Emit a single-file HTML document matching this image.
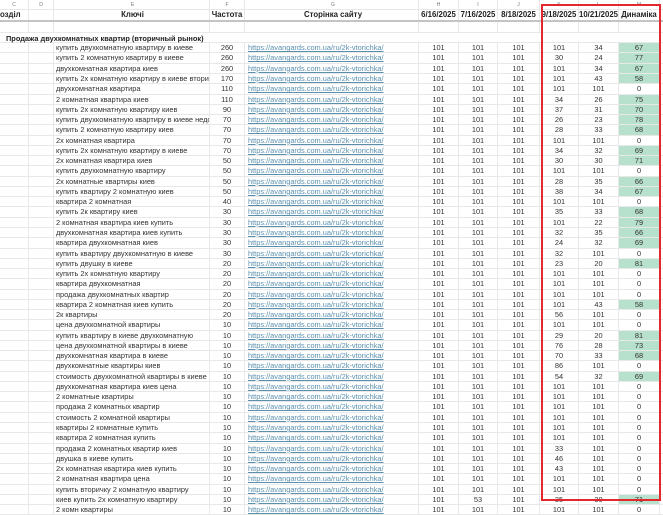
<!DOCTYPE html>
<html><head><meta charset="utf-8"><style>
*{margin:0;padding:0;box-sizing:border-box}
body{width:663px;height:512px;overflow:hidden;background:#fff;font-family:"Liberation Sans","DejaVu Sans",sans-serif;color:#333;font-size:7.4px;position:relative}
.r{display:flex;height:10.27px;border-bottom:1px solid #e8e8e8;line-height:9.3px;white-space:nowrap}
.r>*{border-right:1px solid #e8e8e8;overflow:hidden;text-align:center;font-weight:normal;font-style:normal;text-decoration:none;display:block}
.r>*:nth-child(1){width:29px}.r>*:nth-child(2){width:25px}
.r>*:nth-child(3){width:156px;text-align:left;padding-left:2px}
.r>*:nth-child(4){width:35px}
.r>*:nth-child(5){width:174px;text-align:left;padding-left:3px;color:#5a8fae;text-decoration:underline}
.r>*:nth-child(6){width:40px}.r>*:nth-child(7){width:39px}.r>*:nth-child(8){width:42px}
.r>*:nth-child(9){width:39px}.r>*:nth-child(10){width:40px}.r>*:nth-child(11){width:41px}
.r>*:nth-child(12){width:3px;border-right:none}
.g{background:#b7e1cd}
#hd{position:absolute;left:0;top:0;width:663px}
.lt{height:10px;font-size:5px;color:#777;line-height:10px}
.lt>*{font-size:5px}
.hr{height:12px;line-height:10px;border-bottom:2px solid #c4c4c4}
.hr>*{font-weight:bold!important;color:#222;font-size:7.8px}
#bd{position:absolute;left:0;top:43.2px;width:663px}
#box{position:absolute;left:541px;top:4px;width:120px;height:497px;border:2px solid #e2282c}
.sec{position:absolute;left:6px;top:34px;font-weight:bold;font-size:7.4px;color:#222}
</style></head><body>
<div id="hd">
<div class="r lt"><i>C</i><i>D</i><i style="text-align:center">E</i><i>F</i><i style="text-align:center;color:#777;text-decoration:none">G</i><i>H</i><i>I</i><i>J</i><i>K</i><i>L</i><i>M</i><i></i></div>
<div class="r hr"><i style="text-align:left">озділ</i><i></i><i style="text-align:center">Ключі</i><i>Частота</i><i style="text-align:center;color:#222;text-decoration:none">Сторінка сайту</i><i>6/16/2025</i><i>7/16/2025</i><i>8/18/2025</i><i>9/18/2025</i><i>10/21/2025</i><i>Динаміка</i><i></i></div>
<div class="r" style="height:10.6px"><i></i><i></i><i></i><i></i><i></i><i></i><i></i><i></i><i></i><i></i><i></i><i></i></div>
<div class="r" style="height:10.6px;border-bottom:1px solid #e8e8e8"></div>
</div>
<div class="sec">Продажа двухкомнатных квартир (вторичный рынок)</div>
<div id="bd">
<div class="r"><i></i><i></i><i>купить двухкомнатную квартиру в киеве</i><i>260</i><i>https://avangards.com.ua/ru/2k-vtorichka/</i><i>101</i><i>101</i><i>101</i><i>101</i><i>34</i><i class="g">67</i><i></i></div>
<div class="r"><i></i><i></i><i>купить 2 комнатную квартиру в киеве</i><i>260</i><i>https://avangards.com.ua/ru/2k-vtorichka/</i><i>101</i><i>101</i><i>101</i><i>30</i><i>24</i><i class="g">77</i><i></i></div>
<div class="r"><i></i><i></i><i>двухкомнатная квартира киев</i><i>260</i><i>https://avangards.com.ua/ru/2k-vtorichka/</i><i>101</i><i>101</i><i>101</i><i>101</i><i>34</i><i class="g">67</i><i></i></div>
<div class="r"><i></i><i></i><i>купить 2х комнатную квартиру в киеве вторич-</i><i>170</i><i>https://avangards.com.ua/ru/2k-vtorichka/</i><i>101</i><i>101</i><i>101</i><i>101</i><i>43</i><i class="g">58</i><i></i></div>
<div class="r"><i></i><i></i><i>двухкомнатная квартира</i><i>110</i><i>https://avangards.com.ua/ru/2k-vtorichka/</i><i>101</i><i>101</i><i>101</i><i>101</i><i>101</i><i>0</i><i></i></div>
<div class="r"><i></i><i></i><i>2 комнатная квартира киев</i><i>110</i><i>https://avangards.com.ua/ru/2k-vtorichka/</i><i>101</i><i>101</i><i>101</i><i>34</i><i>26</i><i class="g">75</i><i></i></div>
<div class="r"><i></i><i></i><i>купить 2х комнатную квартиру киев</i><i>90</i><i>https://avangards.com.ua/ru/2k-vtorichka/</i><i>101</i><i>101</i><i>101</i><i>37</i><i>31</i><i class="g">70</i><i></i></div>
<div class="r"><i></i><i></i><i>купить двухкомнатную квартиру в киеве недо</i><i>70</i><i>https://avangards.com.ua/ru/2k-vtorichka/</i><i>101</i><i>101</i><i>101</i><i>26</i><i>23</i><i class="g">78</i><i></i></div>
<div class="r"><i></i><i></i><i>купить 2 комнатную квартиру киев</i><i>70</i><i>https://avangards.com.ua/ru/2k-vtorichka/</i><i>101</i><i>101</i><i>101</i><i>28</i><i>33</i><i class="g">68</i><i></i></div>
<div class="r"><i></i><i></i><i>2х комнатная квартира</i><i>70</i><i>https://avangards.com.ua/ru/2k-vtorichka/</i><i>101</i><i>101</i><i>101</i><i>101</i><i>101</i><i>0</i><i></i></div>
<div class="r"><i></i><i></i><i>купить 2х комнатную квартиру в киеве</i><i>70</i><i>https://avangards.com.ua/ru/2k-vtorichka/</i><i>101</i><i>101</i><i>101</i><i>34</i><i>32</i><i class="g">69</i><i></i></div>
<div class="r"><i></i><i></i><i>2х комнатная квартира киев</i><i>50</i><i>https://avangards.com.ua/ru/2k-vtorichka/</i><i>101</i><i>101</i><i>101</i><i>30</i><i>30</i><i class="g">71</i><i></i></div>
<div class="r"><i></i><i></i><i>купить двухкомнатную квартиру</i><i>50</i><i>https://avangards.com.ua/ru/2k-vtorichka/</i><i>101</i><i>101</i><i>101</i><i>101</i><i>101</i><i>0</i><i></i></div>
<div class="r"><i></i><i></i><i>2х комнатные квартиры киев</i><i>50</i><i>https://avangards.com.ua/ru/2k-vtorichka/</i><i>101</i><i>101</i><i>101</i><i>28</i><i>35</i><i class="g">66</i><i></i></div>
<div class="r"><i></i><i></i><i>купить квартиру 2 комнатную киев</i><i>50</i><i>https://avangards.com.ua/ru/2k-vtorichka/</i><i>101</i><i>101</i><i>101</i><i>38</i><i>34</i><i class="g">67</i><i></i></div>
<div class="r"><i></i><i></i><i>квартира 2 комнатная</i><i>40</i><i>https://avangards.com.ua/ru/2k-vtorichka/</i><i>101</i><i>101</i><i>101</i><i>101</i><i>101</i><i>0</i><i></i></div>
<div class="r"><i></i><i></i><i>купить 2к квартиру киев</i><i>30</i><i>https://avangards.com.ua/ru/2k-vtorichka/</i><i>101</i><i>101</i><i>101</i><i>35</i><i>33</i><i class="g">68</i><i></i></div>
<div class="r"><i></i><i></i><i>2 комнатная квартира киев купить</i><i>30</i><i>https://avangards.com.ua/ru/2k-vtorichka/</i><i>101</i><i>101</i><i>101</i><i>101</i><i>22</i><i class="g">79</i><i></i></div>
<div class="r"><i></i><i></i><i>двухкомнатная квартира киев купить</i><i>30</i><i>https://avangards.com.ua/ru/2k-vtorichka/</i><i>101</i><i>101</i><i>101</i><i>32</i><i>35</i><i class="g">66</i><i></i></div>
<div class="r"><i></i><i></i><i>квартира двухкомнатная киев</i><i>30</i><i>https://avangards.com.ua/ru/2k-vtorichka/</i><i>101</i><i>101</i><i>101</i><i>24</i><i>32</i><i class="g">69</i><i></i></div>
<div class="r"><i></i><i></i><i>купить квартиру двухкомнатную в киеве</i><i>30</i><i>https://avangards.com.ua/ru/2k-vtorichka/</i><i>101</i><i>101</i><i>101</i><i>32</i><i>101</i><i>0</i><i></i></div>
<div class="r"><i></i><i></i><i>купить двушку в киеве</i><i>20</i><i>https://avangards.com.ua/ru/2k-vtorichka/</i><i>101</i><i>101</i><i>101</i><i>23</i><i>20</i><i class="g">81</i><i></i></div>
<div class="r"><i></i><i></i><i>купить 2х комнатную квартиру</i><i>20</i><i>https://avangards.com.ua/ru/2k-vtorichka/</i><i>101</i><i>101</i><i>101</i><i>101</i><i>101</i><i>0</i><i></i></div>
<div class="r"><i></i><i></i><i>квартира двухкомнатная</i><i>20</i><i>https://avangards.com.ua/ru/2k-vtorichka/</i><i>101</i><i>101</i><i>101</i><i>101</i><i>101</i><i>0</i><i></i></div>
<div class="r"><i></i><i></i><i>продажа двухкомнатных квартир</i><i>20</i><i>https://avangards.com.ua/ru/2k-vtorichka/</i><i>101</i><i>101</i><i>101</i><i>101</i><i>101</i><i>0</i><i></i></div>
<div class="r"><i></i><i></i><i>квартира 2 комнатная киев купить</i><i>20</i><i>https://avangards.com.ua/ru/2k-vtorichka/</i><i>101</i><i>101</i><i>101</i><i>101</i><i>43</i><i class="g">58</i><i></i></div>
<div class="r"><i></i><i></i><i>2к квартиры</i><i>20</i><i>https://avangards.com.ua/ru/2k-vtorichka/</i><i>101</i><i>101</i><i>101</i><i>56</i><i>101</i><i>0</i><i></i></div>
<div class="r"><i></i><i></i><i>цена двухкомнатной квартиры</i><i>10</i><i>https://avangards.com.ua/ru/2k-vtorichka/</i><i>101</i><i>101</i><i>101</i><i>101</i><i>101</i><i>0</i><i></i></div>
<div class="r"><i></i><i></i><i>купить квартиру в киеве двухкомнатную</i><i>10</i><i>https://avangards.com.ua/ru/2k-vtorichka/</i><i>101</i><i>101</i><i>101</i><i>29</i><i>20</i><i class="g">81</i><i></i></div>
<div class="r"><i></i><i></i><i>цена двухкомнатной квартиры в киеве</i><i>10</i><i>https://avangards.com.ua/ru/2k-vtorichka/</i><i>101</i><i>101</i><i>101</i><i>76</i><i>28</i><i class="g">73</i><i></i></div>
<div class="r"><i></i><i></i><i>двухкомнатная квартира в киеве</i><i>10</i><i>https://avangards.com.ua/ru/2k-vtorichka/</i><i>101</i><i>101</i><i>101</i><i>70</i><i>33</i><i class="g">68</i><i></i></div>
<div class="r"><i></i><i></i><i>двухкомнатные квартиры киев</i><i>10</i><i>https://avangards.com.ua/ru/2k-vtorichka/</i><i>101</i><i>101</i><i>101</i><i>86</i><i>101</i><i>0</i><i></i></div>
<div class="r"><i></i><i></i><i>стоимость двухкомнатной квартиры в киеве</i><i>10</i><i>https://avangards.com.ua/ru/2k-vtorichka/</i><i>101</i><i>101</i><i>101</i><i>54</i><i>32</i><i class="g">69</i><i></i></div>
<div class="r"><i></i><i></i><i>двухкомнатная квартира киев цена</i><i>10</i><i>https://avangards.com.ua/ru/2k-vtorichka/</i><i>101</i><i>101</i><i>101</i><i>101</i><i>101</i><i>0</i><i></i></div>
<div class="r"><i></i><i></i><i>2 комнатные квартиры</i><i>10</i><i>https://avangards.com.ua/ru/2k-vtorichka/</i><i>101</i><i>101</i><i>101</i><i>101</i><i>101</i><i>0</i><i></i></div>
<div class="r"><i></i><i></i><i>продажа 2 комнатных квартир</i><i>10</i><i>https://avangards.com.ua/ru/2k-vtorichka/</i><i>101</i><i>101</i><i>101</i><i>101</i><i>101</i><i>0</i><i></i></div>
<div class="r"><i></i><i></i><i>стоимость 2 комнатной квартиры</i><i>10</i><i>https://avangards.com.ua/ru/2k-vtorichka/</i><i>101</i><i>101</i><i>101</i><i>101</i><i>101</i><i>0</i><i></i></div>
<div class="r"><i></i><i></i><i>квартиры 2 комнатные купить</i><i>10</i><i>https://avangards.com.ua/ru/2k-vtorichka/</i><i>101</i><i>101</i><i>101</i><i>101</i><i>101</i><i>0</i><i></i></div>
<div class="r"><i></i><i></i><i>квартира 2 комнатная купить</i><i>10</i><i>https://avangards.com.ua/ru/2k-vtorichka/</i><i>101</i><i>101</i><i>101</i><i>101</i><i>101</i><i>0</i><i></i></div>
<div class="r"><i></i><i></i><i>продажа 2 комнатных квартир киев</i><i>10</i><i>https://avangards.com.ua/ru/2k-vtorichka/</i><i>101</i><i>101</i><i>101</i><i>33</i><i>101</i><i>0</i><i></i></div>
<div class="r"><i></i><i></i><i>двушка в киеве купить</i><i>10</i><i>https://avangards.com.ua/ru/2k-vtorichka/</i><i>101</i><i>101</i><i>101</i><i>46</i><i>101</i><i>0</i><i></i></div>
<div class="r"><i></i><i></i><i>2х комнатная квартира киев купить</i><i>10</i><i>https://avangards.com.ua/ru/2k-vtorichka/</i><i>101</i><i>101</i><i>101</i><i>43</i><i>101</i><i>0</i><i></i></div>
<div class="r"><i></i><i></i><i>2 комнатная квартира цена</i><i>10</i><i>https://avangards.com.ua/ru/2k-vtorichka/</i><i>101</i><i>101</i><i>101</i><i>101</i><i>101</i><i>0</i><i></i></div>
<div class="r"><i></i><i></i><i>купить вторичку 2 комнатную квартиру</i><i>10</i><i>https://avangards.com.ua/ru/2k-vtorichka/</i><i>101</i><i>101</i><i>101</i><i>101</i><i>101</i><i>0</i><i></i></div>
<div class="r"><i></i><i></i><i>киев купить 2х комнатную квартиру</i><i>10</i><i>https://avangards.com.ua/ru/2k-vtorichka/</i><i>101</i><i>53</i><i>101</i><i>35</i><i>30</i><i class="g">71</i><i></i></div>
<div class="r"><i></i><i></i><i>2 комн квартиры</i><i>10</i><i>https://avangards.com.ua/ru/2k-vtorichka/</i><i>101</i><i>101</i><i>101</i><i>101</i><i>101</i><i>0</i><i></i></div>
</div>
<div id="box"></div>
</body></html>
